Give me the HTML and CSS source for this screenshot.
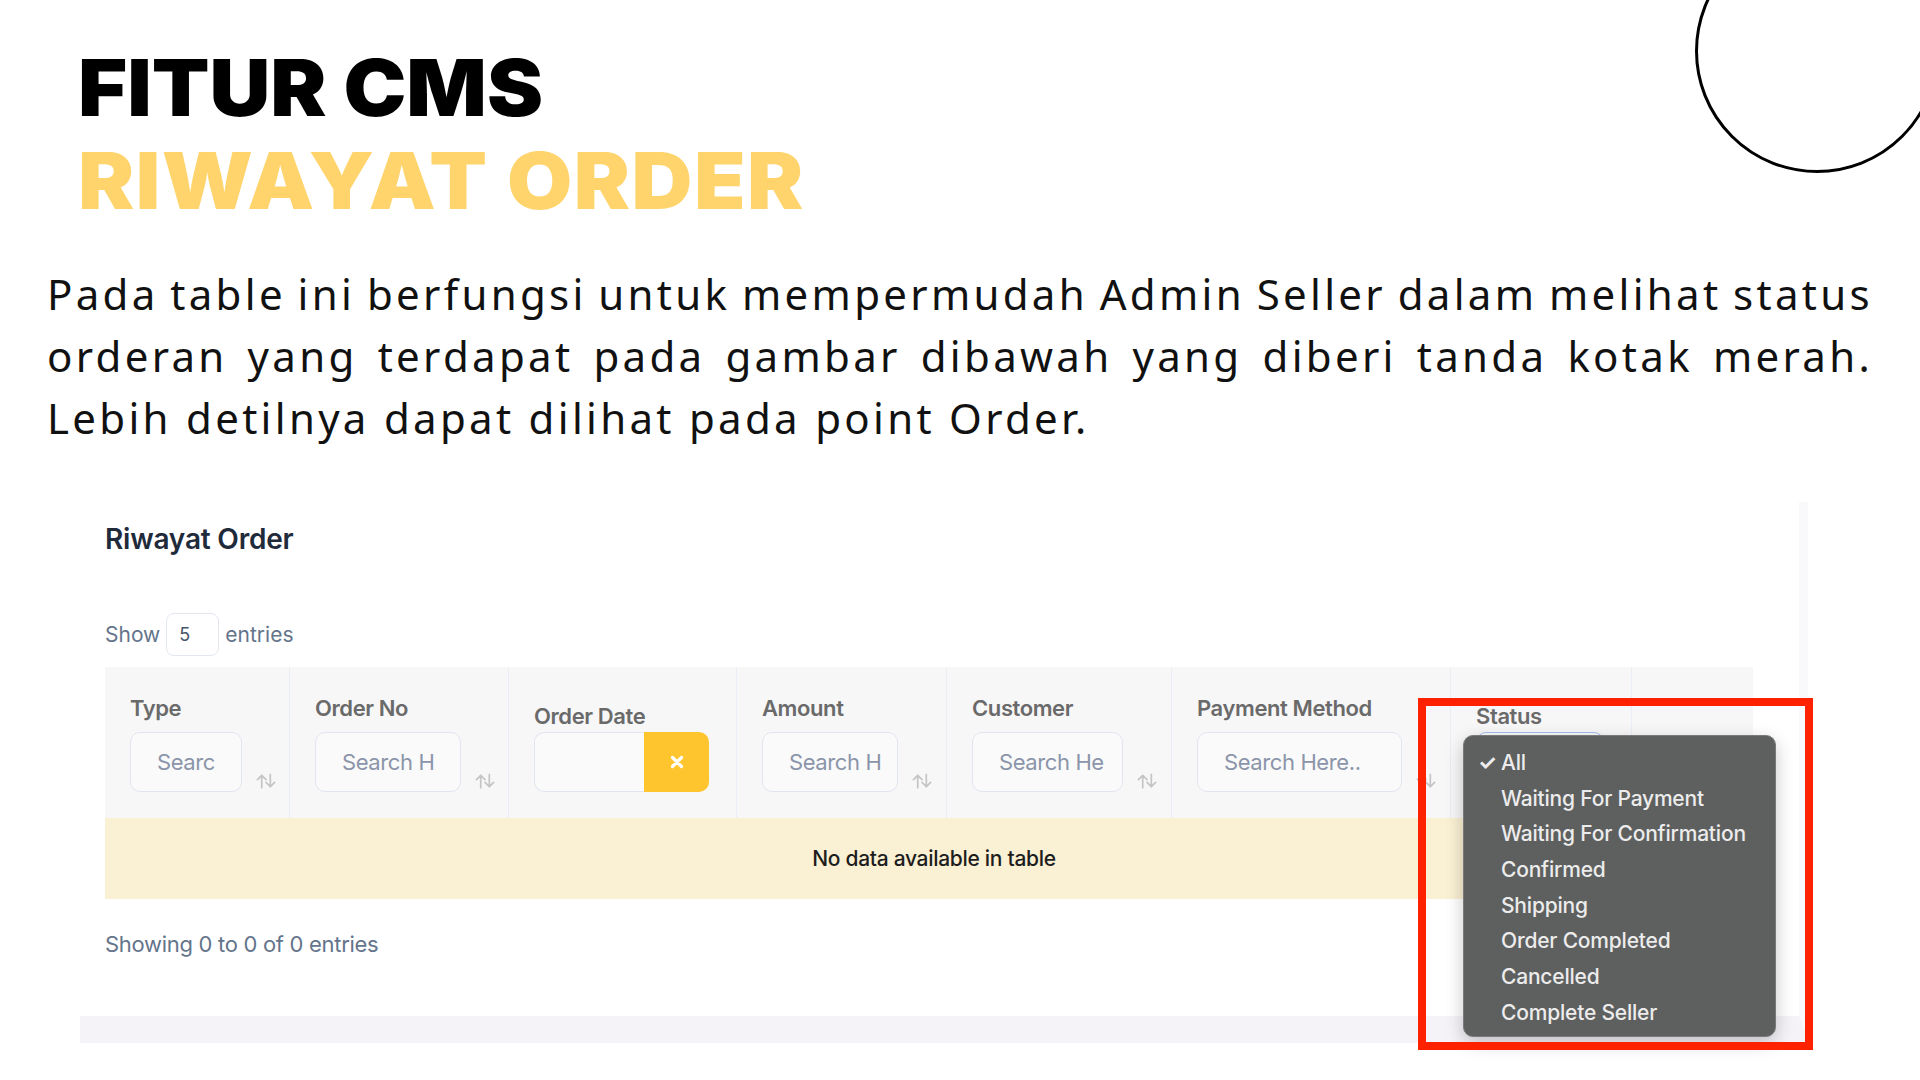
FILE: index.html
```html
<!DOCTYPE html>
<html lang="id">
<head>
<meta charset="utf-8">
<title>Fitur CMS - Riwayat Order</title>
<link rel="stylesheet" href="styles.css">
</head>
<body>
<div class="page">
  <div class="deco-circle"></div>

  <header class="hero">
    <h1 class="title">
      <span class="t1">FITUR CMS</span>
      <span class="t2">RIWAYAT ORDER</span>
    </h1>
  </header>

  <div class="desc">
    <p class="line just">Pada table ini berfungsi untuk mempermudah Admin Seller dalam melihat status</p>
    <p class="line just">orderan yang terdapat pada gambar dibawah yang diberi tanda kotak merah.</p>
    <p class="line">Lebih detilnya dapat dilihat pada point Order.</p>
  </div>

  <section class="card">
    <h2 class="card-title">Riwayat Order</h2>
    <div class="length">
      <span>Show</span>
      <span class="len-box">5</span>
      <span>entries</span>
    </div>

    <div class="thead">
      <div class="th c-type">
        <div class="th-label">Type</div>
        <div class="th-row"><div class="fld w-type">Searc</div><svg class="sort" viewBox="0 0 22 16"><path d="M6 15V2M1.5 6.5 6 2l4.5 4.5M15 1v13M10.5 9.5 15 14l4.5-4.5"/></svg></div>
      </div>
      <div class="th c-no">
        <div class="th-label">Order No</div>
        <div class="th-row"><div class="fld w-no">Search H</div><svg class="sort" viewBox="0 0 22 16"><path d="M6 15V2M1.5 6.5 6 2l4.5 4.5M15 1v13M10.5 9.5 15 14l4.5-4.5"/></svg></div>
      </div>
      <div class="th c-date">
        <div class="th-label low">Order Date</div>
        <div class="th-row"><div class="date-fld"><div class="date-in"></div><div class="date-clear"><svg viewBox="0 0 16 16"><path d="M3.5 3.5l9 9M12.5 3.5l-9 9"/></svg></div></div></div>
      </div>
      <div class="th c-amt">
        <div class="th-label">Amount</div>
        <div class="th-row"><div class="fld w-amt">Search H</div><svg class="sort" viewBox="0 0 22 16"><path d="M6 15V2M1.5 6.5 6 2l4.5 4.5M15 1v13M10.5 9.5 15 14l4.5-4.5"/></svg></div>
      </div>
      <div class="th c-cus">
        <div class="th-label">Customer</div>
        <div class="th-row"><div class="fld w-cus">Search He</div><svg class="sort" viewBox="0 0 22 16"><path d="M6 15V2M1.5 6.5 6 2l4.5 4.5M15 1v13M10.5 9.5 15 14l4.5-4.5"/></svg></div>
      </div>
      <div class="th c-pay">
        <div class="th-label">Payment Method</div>
        <div class="th-row"><div class="fld w-pay">Search Here..</div><svg class="sort" viewBox="0 0 22 16"><path d="M6 15V2M1.5 6.5 6 2l4.5 4.5M15 1v13M10.5 9.5 15 14l4.5-4.5"/></svg></div>
      </div>
      <div class="th c-status">
        <div class="th-label low">Status</div>
        <div class="th-row"><div class="fld w-status focus"></div></div>
      </div>
      <div class="th c-last"></div>
    </div>
    <div class="empty-row">No data available in table</div>

    <div class="info">Showing 0 to 0 of 0 entries</div>
  </section>

  <ul class="status-menu">
    <li class="sel"><span class="check">✓</span>All</li>
    <li>Waiting For Payment</li>
    <li>Waiting For Confirmation</li>
    <li>Confirmed</li>
    <li>Shipping</li>
    <li>Order Completed</li>
    <li>Cancelled</li>
    <li>Complete Seller</li>
  </ul>

  <div class="highlight"></div>
</div>
</body>
</html>
```

FILE: styles.css
```css
* { box-sizing: border-box; }
html, body { margin: 0; padding: 0; }
body { background: #ffffff; }

.page {
  position: relative;
  width: 1920px;
  height: 1080px;
  overflow: hidden;
  background: #ffffff;
}

.deco-circle {
  position: absolute;
  left: 1695px;
  top: -71px;
  width: 244px;
  height: 244px;
  border: 3px solid #000;
  border-radius: 50%;
}

.hero { padding: 41px 0 0 78px; }
.title {
  margin: 0;
  font-family: Inter, "Liberation Sans", sans-serif;
  font-weight: 900;
  font-size: 78px;
  line-height: 93px;
}
.title span {
  display: block;
  transform: scaleX(1.08);
  transform-origin: left center;
  white-space: nowrap;
}
.t1 { color: #000; letter-spacing: 0; }
.t2 { color: #ffd46c; letter-spacing: 1.4px; }

.desc {
  margin: 36px 0 0 47px;
  width: 1826px;
  font-family: "Noto Sans", Lato, sans-serif;
  font-size: 42px;
  line-height: 62px;
  letter-spacing: 3.3px;
  color: #111;
}
.line { margin: 0; white-space: nowrap; }
.line.just { text-align: justify; text-align-last: justify; word-spacing: -8px; }

.card {
  margin: 53px 0 0 80px;
  width: 1728px;
  height: 541px;
  padding: 21px 0 0 25px;
  background: #fff;
  border-right: 9px solid #f9f8fb;
  border-bottom: 27px solid #f5f3f8;
  font-family: Inter, "Liberation Sans", sans-serif;
}
.card-title {
  margin: 0;
  font-size: 28px;
  line-height: 32px;
  font-weight: 600;
  color: #1f2a3a;
  letter-spacing: -0.2px;
}
.length {
  margin-top: 58px;
  display: flex;
  align-items: center;
  gap: 6px;
  font-size: 21px;
  color: #64748b;
  height: 43px;
}
.len-box {
  width: 53px;
  height: 43px;
  border: 1px solid #e3e8ef;
  border-radius: 8px;
  display: flex;
  align-items: center;
  padding-left: 12px;
  color: #475569;
  font-size: 18px;
}

.thead {
  margin-top: 11px;
  width: 1648px;
  height: 151px;
  display: grid;
  grid-template-columns: 185px 219px 228px 210px 225px 279px 181px 121px;
  background: #f7f7f8;
}
.th {
  border-right: 1px solid #e9eef5;
  padding: 28px 0 0 25px;
}
.c-last { border-right: none; }
.th-label {
  font-size: 22px;
  line-height: 26px;
  font-weight: 600;
  color: #6a6a6a;
  letter-spacing: -0.4px;
  margin-bottom: 11px;
  white-space: nowrap;
}
.th-label.low { margin-top: 8px; margin-bottom: 3px; }
.th-row { display: flex; align-items: flex-end; }
.fld {
  height: 60px;
  border: 1.5px solid #e1e6ee;
  border-radius: 10px;
  background: #fafafb;
  font-size: 22px;
  color: #8b95a9;
  display: flex;
  align-items: center;
  padding-left: 26px;
  overflow: hidden;
  white-space: nowrap;
  letter-spacing: -0.4px;
}
.w-type { width: 112px; }
.w-no { width: 146px; }
.w-amt { width: 136px; }
.w-cus { width: 151px; }
.w-pay { width: 205px; }
.w-status { width: 128px; }
.fld.focus { border-color: #a9bdf3; }
.sort {
  width: 21px;
  height: 16px;
  margin: 0 0 3px 14px;
  fill: none;
  stroke: #c5c5c5;
  stroke-width: 1.8;
  stroke-linecap: round;
  stroke-linejoin: round;
}
.date-fld {
  display: flex;
  width: 175px;
  height: 60px;
}
.date-in {
  flex: 1;
  border: 1.5px solid #e1e6ee;
  border-right: none;
  border-radius: 10px 0 0 10px;
  background: #fafafb;
}
.date-clear {
  width: 65px;
  background: #fec52e;
  border-radius: 0 10px 10px 0;
  display: flex;
  align-items: center;
  justify-content: center;
}
.date-clear svg {
  width: 16px;
  height: 16px;
  fill: none;
  stroke: #fff;
  stroke-width: 3.2;
  stroke-linecap: round;
}

.empty-row {
  width: 1648px;
  height: 81px;
  padding-left: 10px;
  background: #faf0d3;
  display: flex;
  align-items: center;
  justify-content: center;
  font-size: 21px;
  font-weight: 500;
  color: #1d1d1d;
  letter-spacing: -0.3px;
}
.info {
  margin-top: 33px;
  font-size: 22px;
  line-height: 24px;
  color: #64748b;
  letter-spacing: -0.3px;
}

.status-menu {
  position: absolute;
  left: 1463px;
  top: 735px;
  width: 313px;
  height: 302px;
  margin: 0;
  padding: 9px 0 0 0;
  list-style: none;
  background: #5e5f5f;
  border: 1px solid #7a7a7a;
  border-radius: 10px;
  box-shadow: 0 6px 18px rgba(0,0,0,0.22);
  font-family: Inter, "Liberation Sans", sans-serif;
  font-size: 21px;
  font-weight: 500;
  color: #ececec;
  letter-spacing: -0.2px;
}
.status-menu li {
  height: 35.7px;
  line-height: 35.7px;
  padding-left: 37px;
  position: relative;
  white-space: nowrap;
}
.check {
  position: absolute;
  left: 14px;
  top: 0;
  font-size: 21px;
  font-weight: 700;
}

.highlight {
  position: absolute;
  left: 1418px;
  top: 698px;
  width: 395px;
  height: 352px;
  border: 8px solid #ff2200;
}
```
